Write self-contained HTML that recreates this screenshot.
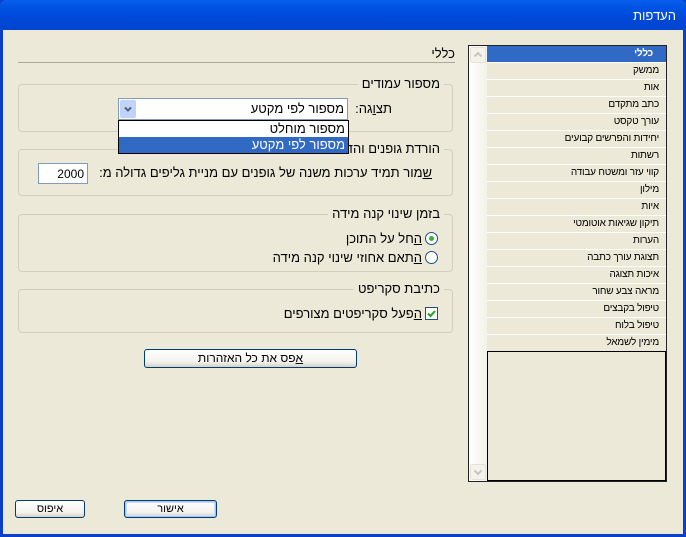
<!DOCTYPE html>
<html><head><meta charset="utf-8"><style>
*{margin:0;padding:0;box-sizing:border-box}
body{width:686px;height:537px;overflow:hidden;background:#0A3FC8;font-family:"Liberation Sans","DejaVu Sans",sans-serif;font-size:11px;color:#000;position:relative}
.a{position:absolute}
#title{left:0;top:0;width:686px;height:30px;background:linear-gradient(#0A5FEF,#0055E5 20%,#0048D8 60%,#0045D0);border-radius:6px 6px 0 0}
#title span{position:absolute;right:10px;top:8px;color:#fff;font-size:13px}
#client{left:3px;top:30px;width:680px;height:504px;background:#ECE9D8}
.grp{position:absolute;border:1px solid #D0D0BF;border-radius:4px}
.lg{position:absolute;background:#ECE9D8;padding:0 4px;font-size:13px;right:8px;top:-9px}
.btn{position:absolute;border:1px solid #003C74;border-radius:3px;background:linear-gradient(#fff,#F3F2EC 70%,#D6D0C5);text-align:center;font-size:11px;line-height:16px}
.item{height:17px;border-bottom:1px solid #fff;text-align:right;padding-right:7px;line-height:16px;font-size:10px;letter-spacing:-0.2px}
.t{position:absolute;font-size:13px;white-space:nowrap;direction:rtl}
</style></head><body>
<div class="a" id="title"><span>העדפות</span></div>
<div class="a" id="client"></div>

<div class="a" style="left:468px;top:45px;width:199px;height:437px;border:1px solid #222;background:#ECE9D8">
 <div class="a" style="left:0;top:0;width:18px;height:435px;background:linear-gradient(90deg,#fff,#F3F1E8)"></div>
 <svg class="a" style="left:1px;top:1px" width="16" height="16"><rect x=".5" y=".5" width="15" height="15" rx="2" fill="#F4F2EA" stroke="#E4E2D8"/><path d="M4.5 9.5l3.5-3.5 3.5 3.5" fill="none" stroke="#C8C6BC" stroke-width="2"/></svg>
 <svg class="a" style="left:1px;top:418px" width="16" height="16"><rect x=".5" y=".5" width="15" height="15" rx="2" fill="#F4F2EA" stroke="#E4E2D8"/><path d="M4.5 6.5l3.5 3.5 3.5-3.5" fill="none" stroke="#C8C6BC" stroke-width="2"/></svg>
 <div class="a" style="left:18px;top:0;width:179px;direction:rtl">
  <div class="item" style="background:#316AC5;color:#fff;font-weight:bold;padding-right:13px">כללי</div>
  <div class="item">ממשק</div>
  <div class="item">אות</div>
  <div class="item">כתב מתקדם</div>
  <div class="item">עורך טקסט</div>
  <div class="item">יחידות והפרשים קבועים</div>
  <div class="item">רשתות</div>
  <div class="item">קווי עזר ומשטח עבודה</div>
  <div class="item">מילון</div>
  <div class="item">איות</div>
  <div class="item">תיקון שגיאות אוטומטי</div>
  <div class="item">הערות</div>
  <div class="item">תצוגת עורך כתבה</div>
  <div class="item">איכות תצוגה</div>
  <div class="item">מראה צבע שחור</div>
  <div class="item">טיפול בקבצים</div>
  <div class="item">טיפול בלוח</div>
  <div class="item" style="border-bottom:none">מימין לשמאל</div>
 </div>
 <div class="a" style="left:18px;top:305px;width:179px;height:130px;border:1px solid #000"></div>
</div>

<div class="t" style="right:231px;top:46px">כללי</div>
<div class="a" style="left:18px;top:62px;width:437px;height:1px;background:#ACA899"></div>

<div class="grp" style="left:18px;top:84px;width:435px;height:48px"><span class="lg">מספור עמודים</span></div>
<div class="t" style="right:294px;top:101px">תצ<u>ו</u>גה:</div>
<div class="a" style="left:118px;top:98px;width:230px;height:22px;border:1px solid #7F9DB9;background:#fff">
 <svg class="a" style="left:1px;top:1px" width="16" height="18"><rect width="16" height="18" rx="2" fill="#C1D3FB"/><path d="M5 7.5l3 3 3-3" fill="none" stroke="#4D6185" stroke-width="2"/></svg>
 <div class="t" style="right:3px;top:2px">מספור לפי מקטע</div>
</div>

<div class="grp" style="left:18px;top:149px;width:435px;height:47px"><span class="lg">הורדת גופנים והדפסה</span></div>
<div class="t" style="right:254px;top:165px"><u>ש</u>מור תמיד ערכות משנה של גופנים עם מניית גליפים גדולה מ:</div>
<div class="a" style="left:38px;top:163px;width:50px;height:21px;border:1px solid #7F9DB9;background:#fff;text-align:right;padding:3px 3px 0 0;font-size:12px">2000</div>

<div class="a" style="left:118px;top:120px;width:231px;height:34px;border:1px solid #000;background:#fff">
 <div class="t" style="right:3px;top:0px">מספור מוחלט</div>
 <div class="a" style="left:0;top:16px;width:229px;height:16px;background:#316AC5"></div>
 <div class="t" style="right:3px;top:16px;color:#fff">מספור לפי מקטע</div>
</div>

<div class="grp" style="left:18px;top:214px;width:435px;height:58px"><span class="lg">בזמן שינוי קנה מידה</span></div>
<div class="a" style="left:425px;top:232px;width:13px;height:13px;border:1px solid #1C5180;border-radius:50%;background:#fff"><div class="a" style="left:3px;top:3px;width:5px;height:5px;border-radius:50%;background:#3AB13A"></div></div>
<div class="t" style="right:264px;top:231px"><u>ה</u>חל על התוכן</div>
<div class="a" style="left:425px;top:251px;width:13px;height:13px;border:1px solid #1C5180;border-radius:50%;background:#fff"></div>
<div class="t" style="right:264px;top:250px"><u>ה</u>תאם אחוזי שינוי קנה מידה</div>

<div class="grp" style="left:18px;top:289px;width:435px;height:44px"><span class="lg">כתיבת סקריפט</span></div>
<svg class="a" style="left:425px;top:307px" width="13" height="13"><rect x=".5" y=".5" width="12" height="12" fill="#fff" stroke="#1C5180"/><path d="M3 6.5l2.5 2.5 4.5-5" fill="none" stroke="#21A121" stroke-width="2"/></svg>
<div class="t" style="right:264px;top:306px"><u>ה</u>פעל סקריפטים מצורפים</div>

<div class="btn" style="left:144px;top:349px;width:213px;height:19px;font-size:12px"><u>א</u>פס את כל האזהרות</div>

<div class="btn" style="left:15px;top:500px;width:70px;height:18px">איפוס</div>
<div class="btn" style="left:124px;top:500px;width:93px;height:18px;box-shadow:inset 0 0 0 1px #A8C4F0,inset 0 0 0 2px #CCDDF8">אישור</div>
</body></html>
